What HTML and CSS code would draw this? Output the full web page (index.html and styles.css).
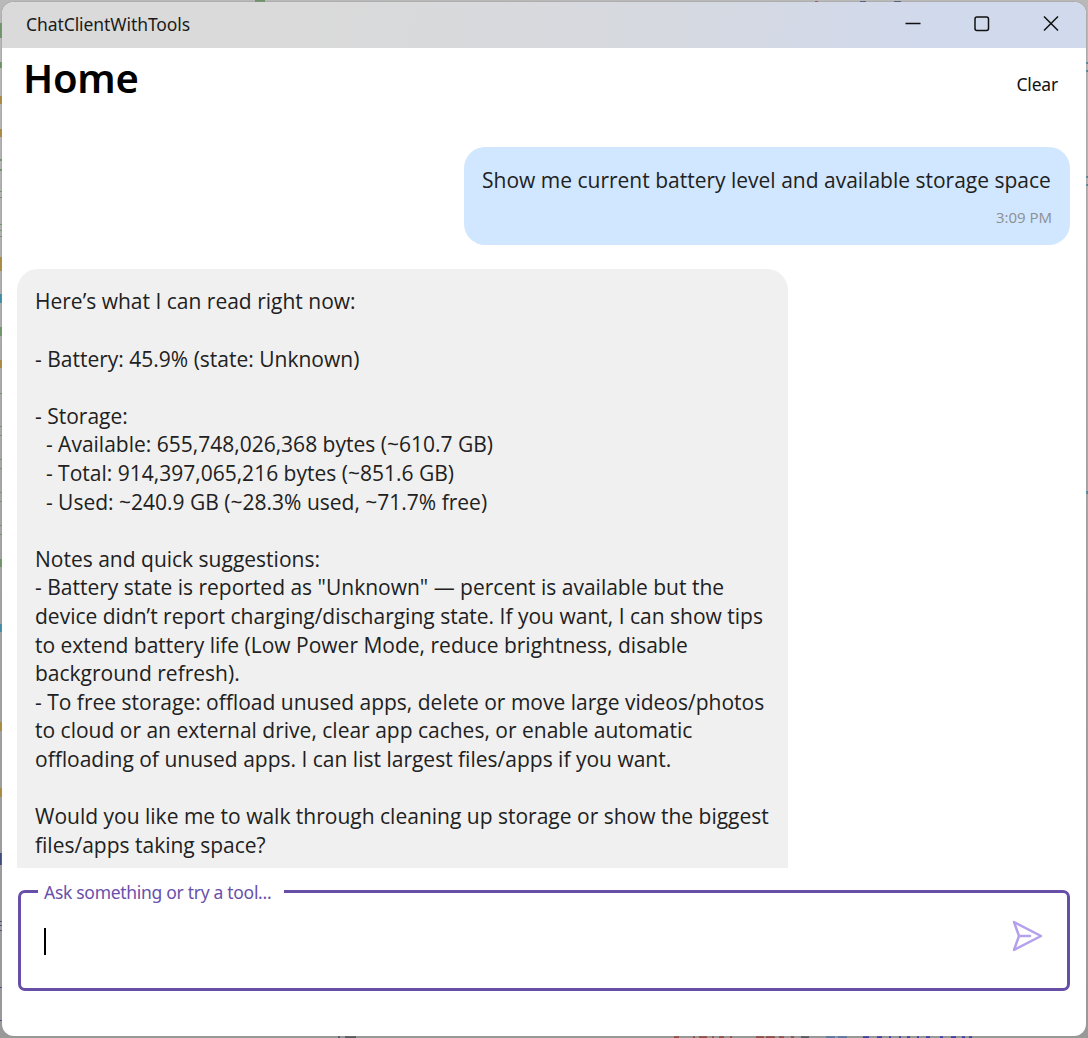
FILE: index.html
```html
<!DOCTYPE html>
<html lang="en">
<head>
<meta charset="utf-8">
<title>ChatClientWithTools</title>
<link rel="stylesheet" href="styles.css">
</head>
<body>
<svg class="backdrop" width="1088" height="1038" viewBox="0 0 1088 1038" aria-hidden="true">
  <g fill="#6f9467">
    <path d="M255 0h10v2h-10zM0 23h2v15H0zM0 62h2v6H0zM0 159h2v2H0zM0 169h2v2H0zM0 191h2v1H0zM0 197h2v1H0zM0 224h2v1H0zM0 230h2v1H0zM0 236h2v1H0zM0 327h2v9H0zM0 393h2v1H0zM0 426h2v1H0zM0 435h2v1H0zM0 459h2v1H0zM0 468h2v1H0zM0 492h2v1H0zM0 501h2v1H0zM0 525h2v1H0zM0 534h2v1H0zM0 559h2v8H0z"/>
  </g>
  <g fill="#a88a42"><path d="M0 96h2v8H0zM0 129h2v8H0zM0 257h2v14H0zM0 360h2v8H0zM0 722h2v9H0zM0 788h2v9H0z"/></g>
  <g fill="#3f8ca3"><path d="M0 294h2v9H0zM0 624h2v8H0zM1086 62h2v2h-2zM1086 70h2v2h-2zM1086 176h2v2h-2zM1086 184h2v2h-2zM1086 491h2v3h-2z"/></g>
  <g fill="#414b78"><path d="M0 853h2v12H0zM0 921h2v1H0zM0 925h2v1H0zM0 930h2v1H0zM0 987h2v1H0zM0 1020h2v1H0zM860 1h6v1h-6zM894 1h7v1h-7z"/></g>
  <g fill="#55585c"><path d="M338 1036h2v2h-2zM345 1036h11v2h-11zM801 1036h8v2h-8z"/></g>
  <g fill="#944b42"><path d="M674 1036h5v2h-5zM693 1036h2v2h-2zM699 1036h8v2h-8zM712 1036h2v2h-2zM719 1036h5v2h-5zM730 1036h2v2h-2zM756 1036h8v2h-8zM766 1036h9v2h-9zM779 1036h5v2h-5zM791 1036h3v2h-3zM815 1h3v1h-3z"/></g>
  <g fill="#5977a3"><path d="M826 1036h9v2h-9zM838 1036h9v2h-9z"/></g>
  <g fill="#393fa6"><path d="M863 1036h6v2h-6zM877 1036h5v2h-5zM889 1036h2v2h-2zM899 1036h2v2h-2zM907 1036h3v2h-3zM917 1036h2v2h-2zM926 1036h4v2h-4zM940 1036h3v2h-3zM951 1036h5v2h-5zM962 1036h3v2h-3zM969 1036h3v2h-3z"/></g>
</svg>
<div class="window">
  <header class="titlebar">
    <span class="app-name">ChatClientWithTools</span>
    <div class="controls">
      <svg width="16" height="16" viewBox="0 0 16 16"><path d="M.5 7.5h15"/></svg>
      <svg width="16" height="16" viewBox="0 0 16 16"><rect x="1" y="1" width="13.5" height="13.5" rx="2"/></svg>
      <svg width="16" height="16" viewBox="0 0 16 16"><path d="M1 .5l14 14M15 .5L1 14.5"/></svg>
    </div>
  </header>
  <div class="page-head">
    <h1>Home</h1>
    <button class="clear">Clear</button>
  </div>
  <main class="messages">
    <article class="bubble user"><p>Show me current battery level and available storage space</p><time>3:09 PM</time></article>
    <article class="bubble assistant"><p>Here’s what I can read right now:

- Battery: 45.9% (state: Unknown)

- Storage:
  - Available: 655,748,026,368 bytes (~610.7 GB)
  - Total: 914,397,065,216 bytes (~851.6 GB)
  - Used: ~240.9 GB (~28.3% used, ~71.7% free)

Notes and quick suggestions:
- Battery state is reported as "Unknown" — percent is available but the
device didn’t report charging/discharging state. If you want, I can show tips
to extend battery life (Low Power Mode, reduce brightness, disable
background refresh).
- To free storage: offload unused apps, delete or move large videos/photos
to cloud or an external drive, clear app caches, or enable automatic
offloading of unused apps. I can list largest files/apps if you want.

Would you like me to walk through cleaning up storage or show the biggest
files/apps taking space?</p></article>
  </main>
  <div class="composer">
    <span class="label"><span>Ask something or try a tool...</span></span>
    <i class="caret"></i>
    <svg class="send" width="32" height="32" viewBox="0 0 32 32"><path d="M2 2l27 14L2 30l5-14zM7 16h11"/></svg>
  </div>
</div>
</body>
</html>
```
FILE: styles.css
```css
* { box-sizing: border-box; }
body {
  margin: 0;
  width: 1088px;
  height: 1038px;
  padding: 2px;
  overflow: hidden;
  background: linear-gradient(#b9b9b9, #a5a5a5 50%, #999);
  font-family: "Open Sans", "Noto Sans", sans-serif;
  color: #212121;
}
.backdrop { position: absolute; left: 0; top: 0; }
.window {
  position: relative;
  display: flex;
  flex-direction: column;
  width: 1084px;
  height: 1034px;
  border-radius: 12px;
  overflow: hidden;
  background: #fff;
  box-shadow: 0 0 0 1px rgba(150, 150, 150, 0.3);
}
.titlebar {
  flex: none;
  display: flex;
  align-items: center;
  justify-content: space-between;
  height: 46px;
  padding: 0 27px 0 24px;
  background: linear-gradient(100deg, #dadada 28%, #d6d9df 60%, #d1d9ec 85%);
}
.app-name {
  padding-bottom: 2px;
  font-family: "Noto Sans", sans-serif;
  font-size: 17.5px;
  color: #1b1b1b;
  letter-spacing: -0.08px;
}
.controls { display: flex; gap: 53px; padding-bottom: 2px; }
.controls svg { fill: none; stroke: #111; stroke-width: 1.5; }
.page-head {
  flex: none;
  display: flex;
  justify-content: space-between;
  height: 78px;
  padding: 0 28px 0 21px;
  font-family: "Noto Sans", sans-serif;
}
h1 {
  margin: 2px 0 0;
  font-size: 40px;
  line-height: 56px;
  font-weight: 600;
  letter-spacing: -0.3px;
  color: #000;
}
.clear {
  align-self: flex-start;
  margin: 23px 0 0;
  padding: 0;
  border: 0;
  background: none;
  font: 17.5px/26px "Noto Sans", sans-serif;
  letter-spacing: -0.2px;
  color: #111;
}
.messages {
  flex: none;
  display: flex;
  flex-direction: column;
  gap: 24px;
  height: 742px;
  padding: 21px 16px 0 15px;
  overflow: hidden;
}
.bubble { flex: none; padding: 18.4px 18px 18px; border-radius: 21px; }
.bubble p { margin: 0; font-size: 21px; line-height: 28.6px; white-space: pre; }
.user {
  align-self: flex-end;
  display: flex;
  flex-direction: column;
  width: 606px;
  height: 98px;
  padding-top: 19px;
  background: #d1e7ff;
}
.user time { align-self: flex-end; margin-top: 12.4px; font-size: 15px; line-height: 20px; color: #8b8f94; }
.assistant { width: 771px; height: 620px; background: #f0f0f0; }
.composer {
  position: relative;
  flex: none;
  display: flex;
  align-items: center;
  justify-content: space-between;
  width: 1052px;
  height: 101px;
  margin: 22px 0 0 16px;
  padding: 0 23px;
  border: 3px solid #674ea7;
  border-radius: 7px;
}
.label {
  position: absolute;
  left: 17px;
  top: -14px;
  width: 246px;
  padding-left: 6px;
  background: #fff;
  font: 17.5px/26px "Noto Sans", sans-serif;
  letter-spacing: -0.3px;
  color: #6a50aa;
  white-space: nowrap;
}
.caret { width: 2px; height: 27px; margin-top: 2px; background: #000; }
.send { margin-bottom: 9px; fill: none; stroke: #b4a0ec; stroke-width: 2.5; stroke-linejoin: round; stroke-linecap: round; }
```
